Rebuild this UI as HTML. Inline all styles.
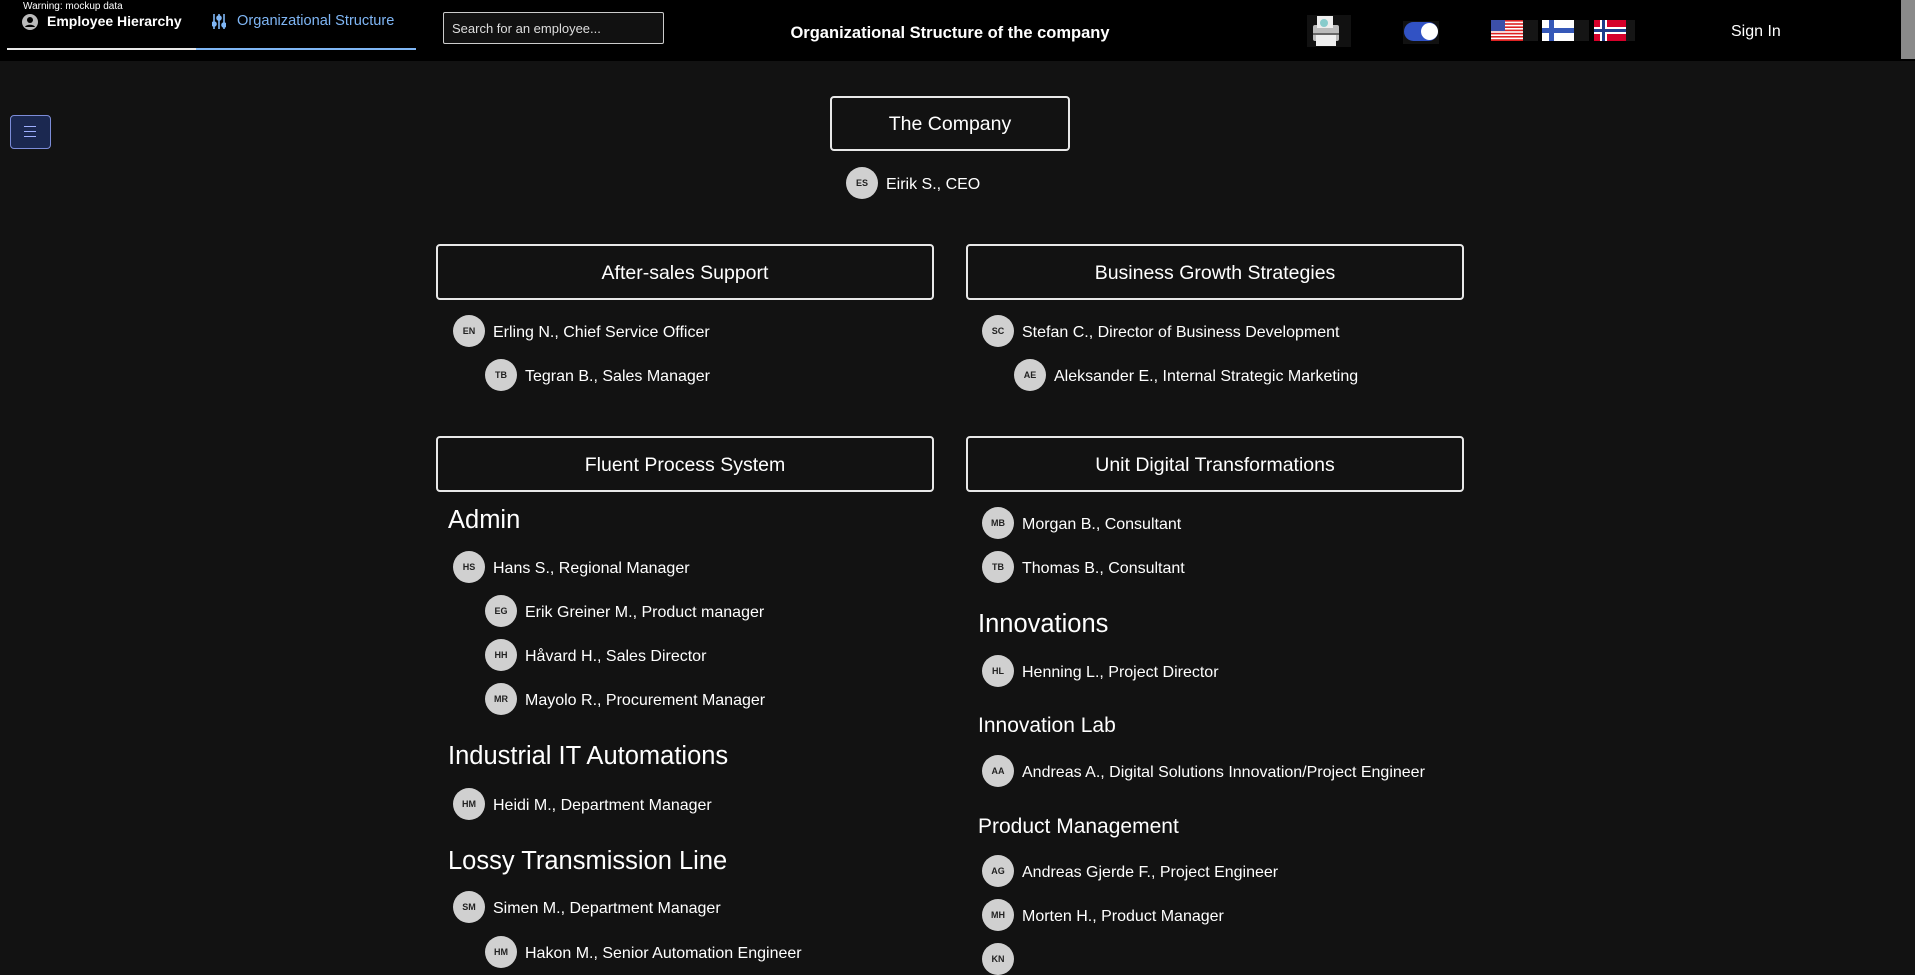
<!DOCTYPE html>
<html><head><meta charset="utf-8"><style>
*{margin:0;padding:0;box-sizing:border-box}
body{width:1915px;height:949px;overflow:hidden;background:#121212;font-family:"Liberation Sans",sans-serif;color:#fff;position:relative}
.a{position:absolute;white-space:nowrap}
.hdr{position:absolute;left:0;top:0;width:1915px;height:61px;background:#000}
.box{position:absolute;border:2px solid #e8e8e8;border-radius:4px;display:flex;align-items:center;justify-content:center;font-size:19.5px;color:#fff;padding-top:2px}
.av{position:absolute;width:32px;height:32px;border-radius:50%;background:#d0d0d0;color:#222;font-size:9px;font-weight:bold;display:flex;align-items:center;justify-content:center}
.pt{position:absolute;font-size:16px;color:#fff;white-space:nowrap;line-height:18px;margin-top:2px}
.h1{position:absolute;font-size:25.5px;white-space:nowrap;line-height:28px;margin-top:1px}
.h2{position:absolute;font-size:21px;white-space:nowrap;line-height:24px;margin-top:1px}
</style></head><body>
<div class="hdr"></div>
<div class="a" style="left:1901px;top:0;width:14px;height:59px;background:#8a8a8a"></div>
<div class="a" style="left:23px;top:1px;font-size:10px;color:#fff">Warning: mockup data</div>
<svg class="a" style="left:22px;top:14px" width="16" height="16" viewBox="0 0 16 16"><circle cx="8" cy="8" r="8" fill="#bbb"/><circle cx="8" cy="6" r="3" fill="#000"/><path d="M3 13c1-3 9-3 10 0" fill="#000"/></svg>
<div class="a" style="left:47px;top:13px;font-size:14px;font-weight:bold">Employee Hierarchy</div>
<svg class="a" style="left:212px;top:13px" width="14" height="17" viewBox="0 0 14 17" stroke="#7fb6f5" stroke-width="1.6" fill="#7fb6f5"><line x1="2" y1="1" x2="2" y2="16"/><line x1="7" y1="1" x2="7" y2="16"/><line x1="12" y1="1" x2="12" y2="16"/><circle cx="2" cy="11" r="2"/><circle cx="7" cy="5" r="2"/><circle cx="12" cy="12" r="2"/></svg>
<div class="a" style="left:237px;top:13px;font-size:14.6px;color:#7fb6f5">Organizational Structure</div>
<div class="a" style="left:7px;top:48px;width:189px;height:2px;background:#e8e8e8"></div>
<div class="a" style="left:196px;top:48px;width:220px;height:2px;background:#7fb6f5"></div>
<div class="a" style="left:443px;top:12px;width:221px;height:32px;border:1px solid #ccc;border-radius:2px;background:#111;font-size:13px;color:#ddd;padding:8px 0 0 8px">Search for an employee...</div>
<div class="a" style="left:950px;top:24px;transform:translateX(-50%);font-size:16.5px;font-weight:bold">Organizational Structure of the company</div>
<svg class="a" style="left:1307px;top:15px" width="44" height="32" viewBox="0 0 44 32"><rect width="44" height="32" fill="#111"/><rect x="6" y="10" width="26" height="16" rx="2" fill="#bbb"/><rect x="10" y="1" width="16" height="12" fill="#eee"/><circle cx="17" cy="8" r="4" fill="#8cc"/><rect x="9" y="20" width="20" height="11" fill="#eee"/><rect x="6" y="18" width="26" height="2" fill="#666"/></svg>
<div class="a" style="left:1403px;top:21px;width:36px;height:23px;background:#111"></div>
<div class="a" style="left:1404px;top:22px;width:34px;height:19px;border-radius:10px;background:#3152c4"></div>
<div class="a" style="left:1421px;top:23px;width:17px;height:17px;border-radius:50%;background:#fff"></div>
<svg class="a" style="left:1491px;top:20px" width="47" height="21" viewBox="0 0 47 21"><rect width="47" height="21" fill="#151515"/><rect width="32" height="21" fill="#fff"/><g fill="#d22"><rect y="0" width="32" height="1.6"/><rect y="3.2" width="32" height="1.6"/><rect y="6.4" width="32" height="1.6"/><rect y="9.6" width="32" height="1.6"/><rect y="12.8" width="32" height="1.6"/><rect y="16" width="32" height="1.6"/><rect y="19.2" width="32" height="1.8"/></g><rect width="14" height="11" fill="#3c4fa8"/></svg>
<svg class="a" style="left:1542px;top:20px" width="47" height="21" viewBox="0 0 47 21"><rect width="47" height="21" fill="#151515"/><rect width="32" height="21" fill="#fff"/><rect x="7" width="5" height="21" fill="#3558b8"/><rect y="8" width="32" height="5" fill="#3558b8"/></svg>
<svg class="a" style="left:1594px;top:20px" width="41" height="21" viewBox="0 0 41 21"><rect width="41" height="21" fill="#151515"/><rect width="32" height="21" fill="#d6002a"/><rect x="6" width="7" height="21" fill="#fff"/><rect y="7" width="32" height="7" fill="#fff"/><rect x="8" width="3" height="21" fill="#1e3d8c"/><rect y="9" width="32" height="3" fill="#1e3d8c"/></svg>
<div class="a" style="left:1731px;top:23px;font-size:16px">Sign In</div>

<div class="a" style="left:10px;top:115px;width:41px;height:34px;background:#1b2850;border:1px solid #7c8cd8;border-radius:4px"></div>
<div class="a" style="left:24px;top:126px;width:12px;height:1px;background:#9fb0ff;box-shadow:0 5px 0 #9fb0ff,0 10px 0 #9fb0ff"></div>

<div class="box" style="left:830px;top:96px;width:240px;height:55px">The Company</div>
<div class="av" style="left:846px;top:167px">ES</div><div class="pt" style="left:886px;top:174px">Eirik S., CEO</div>

<div class="box" style="left:436px;top:244px;width:498px;height:56px">After-sales Support</div>
<div class="box" style="left:966px;top:244px;width:498px;height:56px">Business Growth Strategies</div>
<div class="box" style="left:436px;top:436px;width:498px;height:56px">Fluent Process System</div>
<div class="box" style="left:966px;top:436px;width:498px;height:56px">Unit Digital Transformations</div>

<div class="av" style="left:453px;top:315px">EN</div><div class="pt" style="left:493px;top:322px">Erling N., Chief Service Officer</div>
<div class="av" style="left:485px;top:359px">TB</div><div class="pt" style="left:525px;top:366px">Tegran B., Sales Manager</div>
<div class="av" style="left:982px;top:315px">SC</div><div class="pt" style="left:1022px;top:322px">Stefan C., Director of Business Development</div>
<div class="av" style="left:1014px;top:359px">AE</div><div class="pt" style="left:1054px;top:366px">Aleksander E., Internal Strategic Marketing</div>

<div class="h1" style="left:448px;top:505px">Admin</div>
<div class="av" style="left:453px;top:551px">HS</div><div class="pt" style="left:493px;top:558px">Hans S., Regional Manager</div>
<div class="av" style="left:485px;top:595px">EG</div><div class="pt" style="left:525px;top:602px">Erik Greiner M., Product manager</div>
<div class="av" style="left:485px;top:639px">HH</div><div class="pt" style="left:525px;top:646px">Håvard H., Sales Director</div>
<div class="av" style="left:485px;top:683px">MR</div><div class="pt" style="left:525px;top:690px">Mayolo R., Procurement Manager</div>
<div class="h1" style="left:448px;top:741px">Industrial IT Automations</div>
<div class="av" style="left:453px;top:788px">HM</div><div class="pt" style="left:493px;top:795px">Heidi M., Department Manager</div>
<div class="h1" style="left:448px;top:846px">Lossy Transmission Line</div>
<div class="av" style="left:453px;top:891px">SM</div><div class="pt" style="left:493px;top:898px">Simen M., Department Manager</div>
<div class="av" style="left:485px;top:936px">HM</div><div class="pt" style="left:525px;top:943px">Hakon M., Senior Automation Engineer</div>

<div class="av" style="left:982px;top:507px">MB</div><div class="pt" style="left:1022px;top:514px">Morgan B., Consultant</div>
<div class="av" style="left:982px;top:551px">TB</div><div class="pt" style="left:1022px;top:558px">Thomas B., Consultant</div>
<div class="h1" style="left:978px;top:609px">Innovations</div>
<div class="av" style="left:982px;top:655px">HL</div><div class="pt" style="left:1022px;top:662px">Henning L., Project Director</div>
<div class="h2" style="left:978px;top:713px">Innovation Lab</div>
<div class="av" style="left:982px;top:755px">AA</div><div class="pt" style="left:1022px;top:762px">Andreas A., Digital Solutions Innovation/Project Engineer</div>
<div class="h2" style="left:978px;top:814px">Product Management</div>
<div class="av" style="left:982px;top:855px">AG</div><div class="pt" style="left:1022px;top:862px">Andreas Gjerde F., Project Engineer</div>
<div class="av" style="left:982px;top:899px">MH</div><div class="pt" style="left:1022px;top:906px">Morten H., Product Manager</div>
<div class="av" style="left:982px;top:943px">KN</div>
</body></html>
